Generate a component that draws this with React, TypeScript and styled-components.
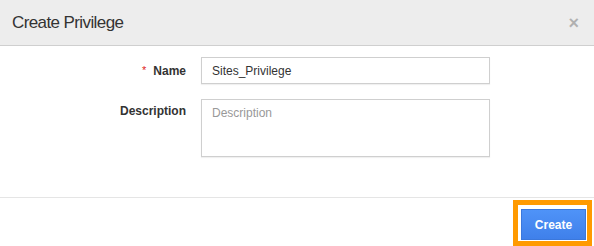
import React from 'react';
import styled, { createGlobalStyle } from 'styled-components';

const GlobalStyle = createGlobalStyle`
  html, body {
    margin: 0;
    padding: 0;
    background: #fff;
  }
  body {
    font-family: "Liberation Sans", Arial, sans-serif;
    color: #333;
  }
  * {
    box-sizing: border-box;
  }
`;

const Modal = styled.div`
  width: 594px;
  height: 246px;
  display: flex;
  flex-direction: column;
  background: #fff;
`;

const Header = styled.div`
  height: 46px;
  flex: none;
  display: flex;
  align-items: center;
  justify-content: space-between;
  padding: 0 12px 0 12px;
  background: #ededed;
  border-bottom: 1px solid #cfcfcf;
`;

const Title = styled.h4`
  margin: 0;
  font-size: 17px;
  font-weight: normal;
  color: #333;
  letter-spacing: -0.6px;
`;

const Close = styled.button`
  border: 0;
  background: transparent;
  padding: 0;
  margin: 0 3px 0 0;
  font-family: "Liberation Sans", Arial, sans-serif;
  font-size: 18px;
  font-weight: bold;
  line-height: 1;
  color: #000;
  opacity: 0.25;
  cursor: pointer;
`;

const Body = styled.div`
  flex: 1;
  display: grid;
  grid-template-columns: 186px 289px;
  column-gap: 15px;
  row-gap: 15px;
  align-content: start;
  padding-top: 11px;
  border-bottom: 1px solid #e5e5e5;
`;

const Label = styled.label<{ $top?: boolean }>`
  display: flex;
  justify-content: flex-end;
  align-items: ${({ $top }) => ($top ? 'flex-start' : 'center')};
  padding-top: ${({ $top }) => ($top ? '5px' : '0')};
  font-size: 12px;
  font-weight: bold;
  color: #333;
`;

const Required = styled.span`
  color: #e02424;
  font-weight: normal;
  font-size: 11px;
  margin-right: 7px;
  align-self: flex-start;
  margin-top: 7px;
`;

const TextInput = styled.input`
  width: 289px;
  height: 27px;
  padding: 0 10px;
  border: 1px solid #cfcfcf;
  box-shadow: 0 1px 1px rgba(0, 0, 0, 0.06);
  font-family: "Liberation Sans", Arial, sans-serif;
  font-size: 12px;
  color: #333;
  outline: none;
`;

const TextArea = styled.textarea`
  width: 289px;
  height: 58px;
  padding: 6px 10px;
  border: 1px solid #cfcfcf;
  box-shadow: 0 1px 1px rgba(0, 0, 0, 0.06);
  font-family: "Liberation Sans", Arial, sans-serif;
  font-size: 12px;
  color: #333;
  resize: none;
  outline: none;
  &::placeholder {
    color: #999;
  }
`;

const Footer = styled.div`
  height: 48px;
  flex: none;
  display: flex;
  justify-content: flex-end;
  align-items: flex-start;
  padding: 2px 2px 0 0;
`;

const Highlight = styled.span`
  display: inline-flex;
  border: 5px solid #ff9a00;
  padding: 4px 1px 1px 3px;
`;

const PrimaryButton = styled.button`
  width: 65px;
  height: 31px;
  border: 1px solid #3b78dc;
  background: linear-gradient(#4f93f8, #3f80ea);
  color: #fff;
  font-family: "Liberation Sans", Arial, sans-serif;
  font-size: 12px;
  font-weight: bold;
  cursor: pointer;
`;

export default function App() {
  return (
    <>
      <GlobalStyle />
      <Modal>
        <Header>
          <Title>Create Privilege</Title>
          <Close aria-label="Close">×</Close>
        </Header>
        <Body>
          <Label htmlFor="name">
            <Required>*</Required>
            Name
          </Label>
          <TextInput id="name" defaultValue="Sites_Privilege" />
          <Label htmlFor="desc" $top>
            Description
          </Label>
          <TextArea id="desc" placeholder="Description" />
        </Body>
        <Footer>
          <Highlight>
            <PrimaryButton>Create</PrimaryButton>
          </Highlight>
        </Footer>
      </Modal>
    </>
  );
}
